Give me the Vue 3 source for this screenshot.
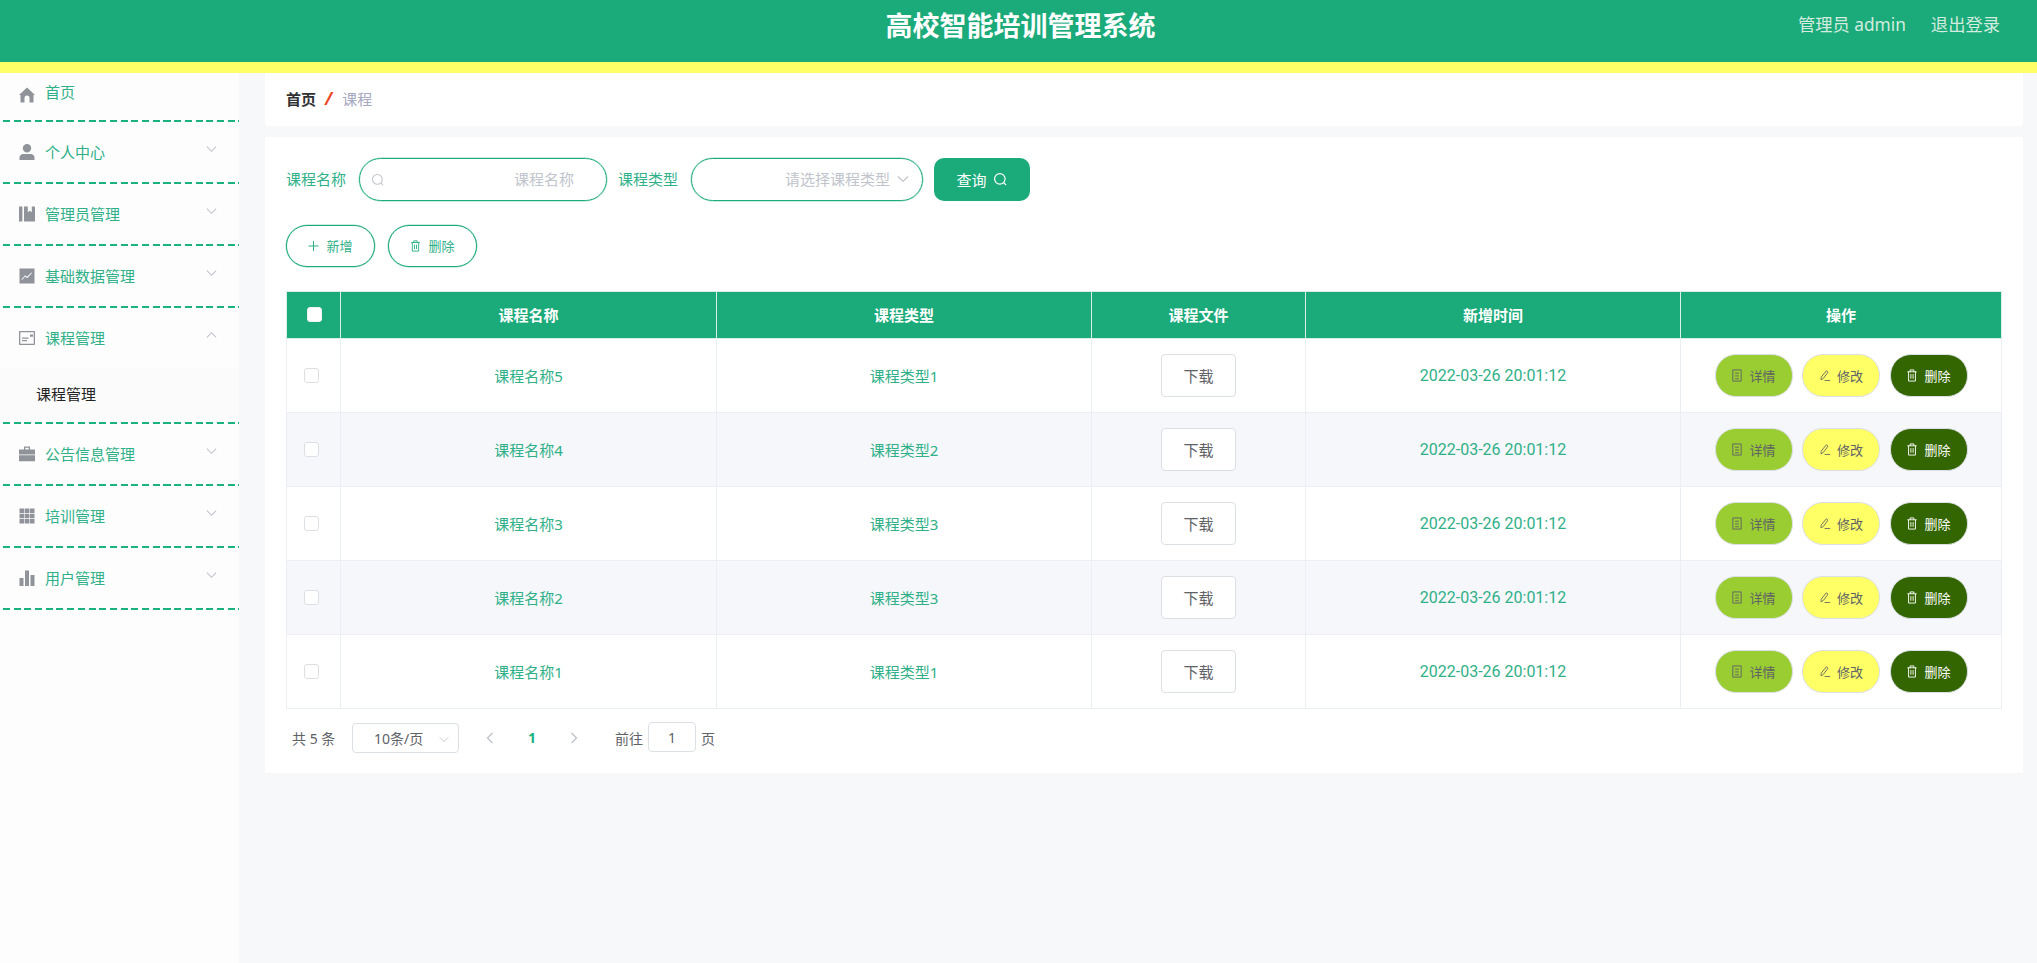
<template>
  <div class="page">
    <header class="top-bar">
      <div class="sys-title">高校智能培训管理系统</div>
      <div class="top-right">
        <span>管理员 admin</span>
        <span>退出登录</span>
      </div>
    </header>

    <div class="body-row">
      <aside class="side-menu">
        <div v-for="item in menus" :key="item.name" class="menu-group" :class="{ first: item.first }">
          <div class="menu-item">
            <svg class="menu-icon" viewBox="0 0 16 16"><path :d="icons[item.icon]" fill-rule="evenodd" /></svg>
            <span class="menu-name">{{ item.name }}</span>
            <svg v-if="!item.first" class="menu-arrow" viewBox="0 0 12 8">
              <path :d="item.open ? 'M1 6.5 6 1.5 11 6.5' : 'M1 1.5 6 6.5 11 1.5'" />
            </svg>
          </div>
          <div v-if="item.open" class="sub-item">课程管理</div>
        </div>
      </aside>

      <main class="main-area">
        <div class="crumb-card">
          <span class="crumb-home">首页</span>
          <span class="crumb-sep">/</span>
          <span class="crumb-now">课程</span>
        </div>

        <section class="list-card">
          <div class="search-row">
            <label class="field-label">课程名称</label>
            <div class="field-box name-box">
              <svg class="field-search" viewBox="0 0 16 16"><circle cx="7.3" cy="7.3" r="5.6" /><path d="M11.5 11.5 14 14" /></svg>
              <span class="field-holder">课程名称</span>
            </div>
            <label class="field-label">课程类型</label>
            <div class="field-box type-box">
              <span class="field-holder">请选择课程类型</span>
              <svg class="field-arrow" viewBox="0 0 12 8"><path d="M1 1.5 6 6.5 11 1.5" /></svg>
            </div>
            <button class="query-btn">
              查询
              <svg viewBox="0 0 16 16"><circle cx="7.3" cy="7.3" r="5.6" /><path d="M11.5 11.5 14 14" /></svg>
            </button>
          </div>

          <div class="tool-row">
            <button class="tool-btn">
              <svg viewBox="0 0 12 12"><path d="M6 .5v11M.5 6h11" /></svg>
              新增
            </button>
            <button class="tool-btn">
              <svg viewBox="0 0 12 14"><path :d="trashPath" /></svg>
              删除
            </button>
          </div>

          <table class="data-table">
            <colgroup>
              <col v-for="w in colWidths" :key="w.id" :style="{ width: w.px + 'px' }" />
            </colgroup>
            <thead>
              <tr>
                <th class="check-head"><span class="check-box"></span></th>
                <th>课程名称</th>
                <th>课程类型</th>
                <th>课程文件</th>
                <th>新增时间</th>
                <th>操作</th>
              </tr>
            </thead>
            <tbody>
              <tr v-for="row in rows" :key="row.name">
                <td class="check-cell"><span class="check-box"></span></td>
                <td>{{ row.name }}</td>
                <td>{{ row.type }}</td>
                <td><button class="down-btn">下载</button></td>
                <td class="time-cell">2022-03-26 20:01:12</td>
                <td>
                  <div class="row-actions">
                    <button class="act-btn act-view">
                      <svg viewBox="0 0 12 14"><path d="M1.5 1h9v12h-9zM4 4.5h4M4 7.5h4M4 10.5h4" /></svg>
                      详情
                    </button>
                    <button class="act-btn act-edit">
                      <svg viewBox="0 0 14 14"><path d="M2.5 9 8.5 1.5l2 1.6L5 10.5l-2.6 1.6zM6.5 12.8h6.5" /></svg>
                      修改
                    </button>
                    <button class="act-btn act-del">
                      <svg viewBox="0 0 12 14"><path :d="trashPath" /></svg>
                      删除
                    </button>
                  </div>
                </td>
              </tr>
            </tbody>
          </table>

          <div class="pager">
            <span class="pager-total">共 5 条</span>
            <div class="pager-size">
              <span>10条/页</span>
              <svg viewBox="0 0 12 8"><path d="M1 1.5 6 6.5 11 1.5" /></svg>
            </div>
            <svg class="pager-prev" viewBox="0 0 8 12"><path d="M6.5 1 1.5 6l5 5" /></svg>
            <span class="pager-num">1</span>
            <svg class="pager-next" viewBox="0 0 8 12"><path d="M1.5 1l5 5-5 5" /></svg>
            <span class="pager-goto">前往</span>
            <span class="pager-input">1</span>
            <span>页</span>
          </div>
        </section>
      </main>
    </div>
  </div>
</template>

<script setup>
const icons = {
  home: 'M8 .5 16 8H14.5V15.5H10.5V11a2.5 2.5 0 0 0-5 0V15.5H1.5V8H0Z',
  user: 'M8 0a4.2 4.2 0 1 1 0 8.4A4.2 4.2 0 1 1 8 0ZM.5 16v-2.6C.5 11.4 2.5 10 4.5 10h7c2 0 4 1.4 4 3.4V16Z',
  book: 'M0 .5h3.4v15H0ZM5 .5h3.8v5.8l2-1.6 2 1.6V.5H16v15H5Z',
  chart: 'M.5 .5h15v15H.5ZM3 12l3.2-3.4 2 1.6L13 5l-.6-.6-4.3 4.4-2-1.6L2.4 11.4Z',
  card: 'M.8 1h14.4a.8.8 0 0 1 .8.8v12.4a.8.8 0 0 1-.8.8H.8a.8.8 0 0 1-.8-.8V1.8a.8.8 0 0 1 .8-.8ZM1.3 2.3v11.4h13.4V2.3ZM3 7.6h6.5v1.2H3ZM3 10h5v1.2H3ZM11 4.5h3v2.2h-3Z',
  case: 'M5 .5h6v3h5v5H0v-5h5Zm1.3 1.3v1.7h3.4V1.8ZM0 9.3h16v6H0Z',
  grid: 'M.5 .5h4.6v4.6H.5ZM5.7 .5h4.6v4.6H5.7ZM10.9 .5h4.6v4.6h-4.6ZM.5 5.7h4.6v4.6H.5ZM5.7 5.7h4.6v4.6H5.7ZM10.9 5.7h4.6v4.6h-4.6ZM.5 10.9h4.6v4.6H.5ZM5.7 10.9h4.6v4.6H5.7ZM10.9 10.9h4.6v4.6h-4.6Z',
  bars: 'M.5 8h4v8h-4ZM6 .5h4V16H6ZM11.5 5h4v11h-4Z'
}

const trashPath = 'M1 3h10M4 3V1h4v2M2.3 3v10h7.4V3M4.8 5.5v5M7.2 5.5v5'

const menus = [
  { name: '首页', icon: 'home', first: true },
  { name: '个人中心', icon: 'user' },
  { name: '管理员管理', icon: 'book' },
  { name: '基础数据管理', icon: 'chart' },
  { name: '课程管理', icon: 'card', open: true },
  { name: '公告信息管理', icon: 'case' },
  { name: '培训管理', icon: 'grid' },
  { name: '用户管理', icon: 'bars' }
]

const colWidths = [
  { id: 'check', px: 54 },
  { id: 'name', px: 376 },
  { id: 'type', px: 375 },
  { id: 'file', px: 214 },
  { id: 'time', px: 375 },
  { id: 'ops', px: 321 }
]

const rows = [
  { name: '课程名称5', type: '课程类型1' },
  { name: '课程名称4', type: '课程类型2' },
  { name: '课程名称3', type: '课程类型3' },
  { name: '课程名称2', type: '课程类型3' },
  { name: '课程名称1', type: '课程类型1' }
]
</script>

<style>
html,
body {
  margin: 0;
  background: #f6f8fa;
}
</style>

<style scoped>
.page {
  min-height: 963px;
  display: flex;
  flex-direction: column;
  font-family: "Noto Sans", "Noto Sans CJK SC", sans-serif;
  font-size: 15px;
  color: #2fb088;
  background: #f6f8fa;
}

button {
  font-family: inherit;
  cursor: pointer;
}

/* 顶部栏 */
.top-bar {
  height: 62px;
  border-bottom: 11px solid #ffff66;
  background: #1baa7a;
  display: flex;
  align-items: flex-start;
  justify-content: center;
  position: relative;
}

.sys-title {
  font-size: 27px;
  font-weight: 700;
  line-height: 51px;
  color: #fff;
  margin-left: 4px;
}

.top-right {
  position: absolute;
  right: 37px;
  top: 12px;
  display: flex;
  gap: 25px;
  font-size: 17.3px;
  line-height: 26px;
  color: #d3ecdf;
}

.body-row {
  flex: 1;
  display: flex;
}

/* 侧边菜单 */
.side-menu {
  width: 239px;
  flex: none;
  background: #fdfdfd;
}

.menu-group {
  padding-bottom: 2px;
  background: repeating-linear-gradient(90deg, #1bb27f 0 7px, transparent 7px 10.7px) 3px bottom / 100% 2px no-repeat;
}

.menu-item {
  height: 60px;
  padding-left: 19px;
  display: flex;
  align-items: center;
  position: relative;
}

.first .menu-item {
  height: 47px;
}

.menu-icon {
  width: 16px;
  height: 16px;
  fill: #909399;
  margin-right: 10px;
  flex: none;
}

.first .menu-icon {
  position: relative;
  top: -2px;
}

.menu-name {
  position: relative;
  top: -1px;
}

.first .menu-name {
  top: -5px;
}

.menu-arrow {
  position: absolute;
  left: 206px;
  top: 23px;
  width: 11px;
  height: 8px;
  fill: none;
  stroke: #c0c4cc;
  stroke-width: 1.2;
}

.sub-item {
  height: 54px;
  padding-left: 36px;
  line-height: 52px;
  color: #222;
  background: #fbfbfb;
  box-sizing: border-box;
}

/* 主内容 */
.main-area {
  flex: 1;
  min-width: 0;
  padding: 0 14px 0 26px;
}

.crumb-card {
  height: 53px;
  box-sizing: border-box;
  padding: 0 0 2px 21px;
  background: #fff;
  border-radius: 0 0 4px 4px;
  display: flex;
  align-items: center;
  margin-bottom: 11px;
}

.crumb-home {
  color: #303133;
  font-weight: 700;
}

.crumb-sep {
  margin: 0 9px;
  color: #f0441f;
  font-size: 17px;
  font-weight: 700;
  font-style: italic;
}

.crumb-now {
  color: #a5a8c0;
  margin-left: 1px;
}

.list-card {
  background: #fff;
  padding: 21px 22px 0 21px;
  height: 636px;
  box-sizing: border-box;
}

.search-row {
  display: flex;
  align-items: center;
  height: 43px;
}

.field-label {
  width: 60px;
  margin-right: 13px;
  padding-bottom: 2px;
}

.field-box {
  height: 43px;
  box-sizing: border-box;
  border: 1px solid #1baa7a;
  box-shadow: 0 0 0 0.5px rgba(27, 170, 122, 0.45);
  border-radius: 22px;
  display: flex;
  align-items: center;
  justify-content: flex-end;
  position: relative;
  color: #c0c4cc;
}

.field-holder {
  padding-bottom: 2px;
}

.name-box {
  width: 248px;
  padding-right: 32px;
  margin-right: 11px;
}

.type-box {
  width: 232px;
  padding-right: 32px;
  margin-right: 11px;
}

.field-search {
  position: absolute;
  left: 11px;
  top: 14px;
  width: 14px;
  height: 14px;
  fill: none;
  stroke: #c0c4cc;
  stroke-width: 1.2;
}

.field-arrow {
  position: absolute;
  right: 13px;
  top: 16px;
  width: 12px;
  height: 8px;
  fill: none;
  stroke: #c0c4cc;
  stroke-width: 1.2;
}

.query-btn {
  width: 96px;
  height: 43px;
  border: none;
  border-radius: 10px;
  background: #1baa7a;
  color: #fff;
  font-size: 15px;
  display: flex;
  align-items: center;
  justify-content: center;
  gap: 6px;
  padding: 0;
}

.query-btn svg {
  width: 15px;
  height: 15px;
  fill: none;
  stroke: #fff;
  stroke-width: 1.3;
}

.tool-row {
  display: flex;
  gap: 13px;
  margin-top: 24px;
}

.tool-btn {
  width: 89px;
  height: 42px;
  box-sizing: border-box;
  border: 1px solid #1baa7a;
  box-shadow: 0 0 0 0.5px rgba(27, 170, 122, 0.45);
  border-radius: 21px;
  background: #fff;
  color: #2fb088;
  font-size: 13px;
  display: flex;
  align-items: center;
  justify-content: center;
  gap: 7px;
  padding: 0 0 1px;
}

.tool-btn svg {
  width: 11px;
  height: 12px;
  fill: none;
  stroke: #1baa7a;
  stroke-width: 1;
}

/* 表格 */
.data-table {
  width: 1715px;
  margin-top: 24px;
  border-collapse: collapse;
  table-layout: fixed;
  text-align: center;
}

.data-table th {
  height: 44px;
  padding: 0 0 2px;
  background: #1baa7a;
  color: #fff;
  font-weight: 700;
  border: 1px solid #d9efe6;
}

.data-table td {
  height: 73px;
  padding: 0;
  border: 1px solid #ebeef5;
}

.data-table tbody tr:nth-child(even) td {
  background: #f5f7fa;
}

.check-box {
  display: block;
  width: 15px;
  height: 15px;
  box-sizing: border-box;
  background: #fff;
  border: 1px solid #dcdfe6;
  border-radius: 3px;
}

.check-head .check-box {
  margin-left: 20px;
  border-color: #f2f2f2;
}

.check-cell .check-box {
  margin-left: 17px;
}

.down-btn {
  width: 75px;
  height: 43px;
  box-sizing: border-box;
  border: 1px solid #dcdfe6;
  border-radius: 4px;
  background: #fff;
  color: #606266;
  font-size: 15px;
  padding: 0;
}

.time-cell {
  font-family: Roboto, "Noto Sans", sans-serif;
  font-size: 16px;
}

.row-actions {
  display: flex;
  justify-content: center;
  gap: 9.5px;
}

.act-btn {
  width: 78px;
  height: 43px;
  box-sizing: border-box;
  border: 1px solid #dcdfe6;
  border-radius: 21px;
  font-size: 13px;
  display: flex;
  align-items: center;
  justify-content: center;
  gap: 6px;
  padding: 0 0 1px;
  color: #606266;
}

.act-btn svg {
  width: 12px;
  height: 13px;
  fill: none;
  stroke: currentColor;
  stroke-width: 1;
}

.act-view {
  background: #9acd32;
}

.act-edit {
  background: #ffff66;
}

.act-del {
  background: #336600;
  color: #fff;
}

/* 分页 */
.pager {
  display: flex;
  align-items: center;
  height: 31px;
  margin-top: 13px;
  padding: 0 0 1px 5px;
  font-size: 14px;
  color: #606266;
}

.pager-total {
  width: 60px;
  margin-left: 1px;
}

.pager-size {
  width: 107px;
  height: 30px;
  box-sizing: border-box;
  border: 1px solid #dcdfe6;
  border-radius: 4px;
  display: flex;
  align-items: center;
  padding-left: 21px;
  position: relative;
}

.pager-size svg {
  position: absolute;
  right: 9px;
  top: 12px;
  width: 10px;
  height: 7px;
  fill: none;
  stroke: #c0c4cc;
  stroke-width: 1.1;
}

.pager-prev,
.pager-next {
  width: 8px;
  height: 12px;
  fill: none;
  stroke: #c0c4cc;
  stroke-width: 1.4;
}

.pager-prev {
  margin-left: 27px;
}

.pager-num {
  width: 8px;
  margin: 0 34px 0 34px;
  font-weight: 700;
  color: #1bb27f;
}

.pager-next {
  margin-right: 37px;
}

.pager-goto {
  margin-right: 5px;
}

.pager-input {
  width: 48px;
  height: 30px;
  box-sizing: border-box;
  border: 1px solid #dcdfe6;
  border-radius: 4px;
  display: flex;
  align-items: center;
  justify-content: center;
  margin-right: 5px;
  margin-top: -1px;
}
</style>
